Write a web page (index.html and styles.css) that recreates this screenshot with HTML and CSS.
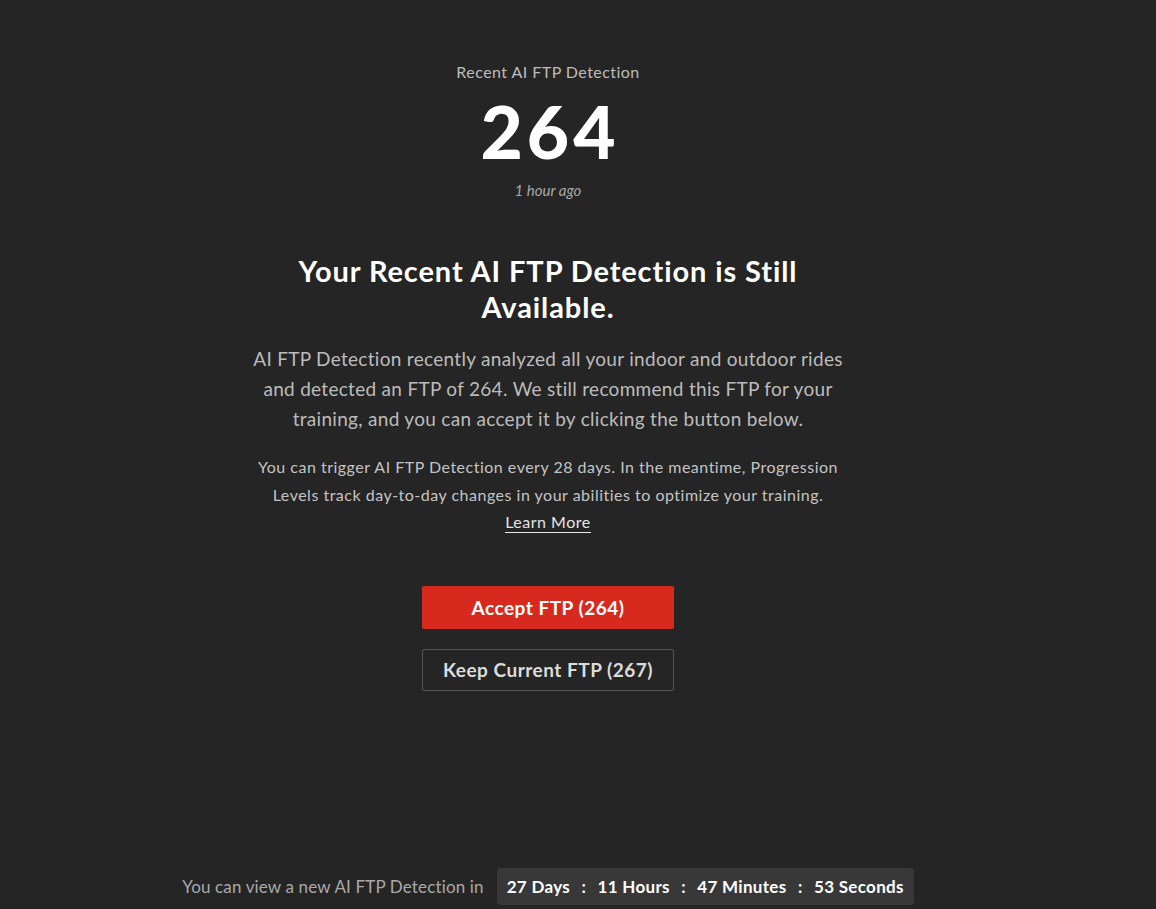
FILE: index.html
```html
<!DOCTYPE html>
<html lang="en">
<head>
    <meta charset="UTF-8">
    <meta name="viewport" content="width=device-width, initial-scale=1.0">
    <title>AI FTP Detection</title>
    <link rel="stylesheet" href="styles.css">
</head>
<body>
    <div class="page">
        <div class="detection">
            <div class="detection-label">Recent AI FTP Detection</div>
            <div class="detection-value">264</div>
            <div class="detection-time">1 hour ago</div>
        </div>

        <div class="message">
            <h1>Your Recent AI FTP Detection is Still Available.</h1>
            <p class="lead">AI FTP Detection recently analyzed all your indoor and outdoor rides and detected an FTP of 264. We still recommend this FTP for your training, and you can accept it by clicking the button below.</p>
            <p class="note">You can trigger AI FTP Detection every 28 days. In the meantime, Progression Levels track day-to-day changes in your abilities to optimize your training.<br><a href="#" class="learn-more">Learn More</a></p>
        </div>

        <div class="actions">
            <button class="btn btn-primary">Accept FTP (264)</button>
            <button class="btn btn-outline">Keep Current FTP (267)</button>
        </div>

        <div class="countdown">
            <span class="countdown-label">You can view a new AI FTP Detection in</span>
            <span class="countdown-timer">27 Days <span class="sep">:</span> 11 Hours <span class="sep">:</span> 47 Minutes <span class="sep">:</span> 53 Seconds</span>
        </div>
    </div>
</body>
</html>
```

FILE: styles.css
```css
html, body {
    margin: 0;
    padding: 0;
    background-color: #252525;
}
body {
    font-family: Lato, "Open Sans", Arial, sans-serif;
    font-variant-ligatures: none;
    color: #c2c2c2;
    text-align: center;
}
.page {
    width: 1096px;
    min-height: 909px;
    display: flex;
    flex-direction: column;
    align-items: center;
    box-sizing: border-box;
    padding-top: 61px;
}
.detection-label {
    font-size: 16px;
    letter-spacing: 0.45px;
    line-height: 22px;
    color: #bdbdbd;
}
.detection-value {
    font-size: 73px;
    font-weight: 900;
    letter-spacing: 4px;
    padding-left: 4px;
    color: #fff;
    line-height: 80px;
    margin-top: 8px;
}
.detection-time {
    font-size: 15px;
    font-style: italic;
    color: #a8a8a8;
    line-height: 20px;
    margin-top: 9px;
}
.message {
    width: 620px;
    margin-top: 53px;
}
h1 {
    font-size: 29px;
    letter-spacing: 0.9px;
    line-height: 36px;
    font-weight: 700;
    color: #fff;
    margin: 0 40px;
}
.lead {
    font-size: 19px;
    letter-spacing: 0.3px;
    line-height: 30px;
    margin: 19px 0 0;
    color: #bcbcbc;
}
.note {
    font-size: 16px;
    letter-spacing: 0.5px;
    line-height: 27.5px;
    margin: 19px 0 0;
    color: #c4c4c4;
}
.learn-more {
    color: #e6e6e6;
    text-decoration: none;
    border-bottom: 1px solid #e6e6e6;
    padding-bottom: 1px;
}
.actions {
    display: flex;
    flex-direction: column;
    gap: 20px;
    margin-top: 50px;
}
.btn {
    width: 252px;
    height: 43px;
    font-family: inherit;
    font-size: 19px;
    font-weight: 700;
    letter-spacing: 0.5px;
    border-radius: 2px;
    cursor: pointer;
}
.btn-primary {
    background-color: #d7291e;
    color: #fff;
    border: none;
}
.btn-outline {
    background-color: transparent;
    color: #dcdcdc;
    border: 1px solid #575757;
    height: 42px;
}
.countdown {
    margin-top: auto;
    margin-bottom: 4px;
    display: flex;
    align-items: center;
    gap: 13px;
}
.countdown-label {
    font-size: 17px;
    letter-spacing: 0.15px;
    color: #a9a9a9;
}
.countdown-timer {
    background-color: #383838;
    border-radius: 4px;
    padding: 0 10px;
    height: 37px;
    line-height: 37px;
    font-size: 17px;
    font-weight: 700;
    letter-spacing: 0.3px;
    color: #fff;
}
.sep {
    margin: 0 7px;
}
```
